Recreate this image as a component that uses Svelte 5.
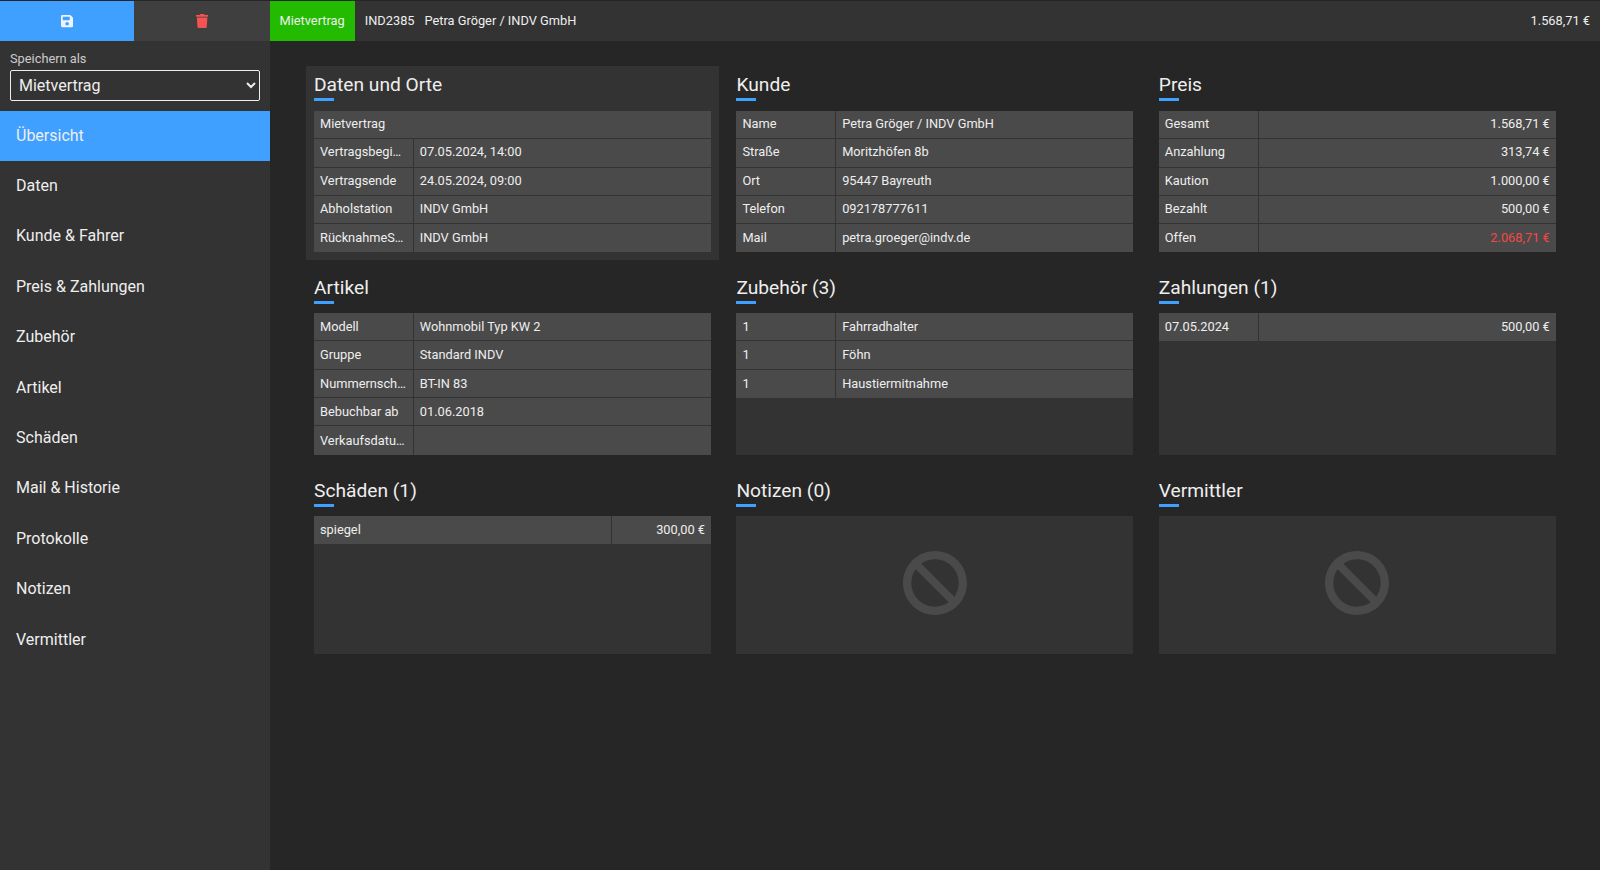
<script>
  // Contract overview: left nav plus a 3x3 grid of summary panels
  const navItems = ['Übersicht', 'Daten', 'Kunde & Fahrer', 'Preis & Zahlungen', 'Zubehör', 'Artikel', 'Schäden', 'Mail & Historie', 'Protokolle', 'Notizen', 'Vermittler'];

  const panels = [
    { title: 'Daten und Orte', active: true, rows: [
      { full: 'Mietvertrag' },
      { k: 'Vertragsbeginn', v: '07.05.2024, 14:00' },
      { k: 'Vertragsende', v: '24.05.2024, 09:00' },
      { k: 'Abholstation', v: 'INDV GmbH' },
      { k: 'RücknahmeStation', v: 'INDV GmbH' }
    ] },
    { title: 'Kunde', rows: [
      { k: 'Name', v: 'Petra Gröger / INDV GmbH' },
      { k: 'Straße', v: 'Moritzhöfen 8b' },
      { k: 'Ort', v: '95447 Bayreuth' },
      { k: 'Telefon', v: '092178777611' },
      { k: 'Mail', v: 'petra.groeger@indv.de' }
    ] },
    { title: 'Preis', right: true, rows: [
      { k: 'Gesamt', v: '1.568,71 €' },
      { k: 'Anzahlung', v: '313,74 €' },
      { k: 'Kaution', v: '1.000,00 €' },
      { k: 'Bezahlt', v: '500,00 €' },
      { k: 'Offen', v: '2.068,71 €', red: true }
    ] },
    { title: 'Artikel', rows: [
      { k: 'Modell', v: 'Wohnmobil Typ KW 2' },
      { k: 'Gruppe', v: 'Standard INDV' },
      { k: 'Nummernschild', v: 'BT-IN 83' },
      { k: 'Bebuchbar ab', v: '01.06.2018' },
      { k: 'Verkaufsdatum', v: '' }
    ] },
    { title: 'Zubehör (3)', rows: [
      { k: '1', v: 'Fahrradhalter' },
      { k: '1', v: 'Föhn' },
      { k: '1', v: 'Haustiermitnahme' }
    ] },
    { title: 'Zahlungen (1)', right: true, rows: [
      { k: '07.05.2024', v: '500,00 €' }
    ] },
    { title: 'Schäden (1)', right: true, wide: true, rows: [
      { k: 'spiegel', v: '300,00 €' }
    ] },
    { title: 'Notizen (0)', rows: [] },
    { title: 'Vermittler', rows: [] }
  ];
</script>

<div class="app">
  <header class="topbar">
    <button class="action save" aria-label="Speichern">
      <svg viewBox="0 0 448 512" width="12.25" height="14"><path fill="currentColor" d="M433.941 129.941l-83.882-83.882A48 48 0 0 0 316.118 32H48C21.49 32 0 53.49 0 80v352c0 26.51 21.49 48 48 48h352c26.51 0 48-21.49 48-48V163.882a48 48 0 0 0-14.059-33.941zM224 416c-35.346 0-64-28.654-64-64 0-35.346 28.654-64 64-64s64 28.654 64 64c0 35.346-28.654 64-64 64zm96-304.52V212c0 6.627-5.373 12-12 12H76c-6.627 0-12-5.373-12-12V108c0-6.627 5.373-12 12-12h228.52c3.183 0 6.235 1.264 8.485 3.515l3.48 3.48A11.996 11.996 0 0 1 320 111.48z"/></svg>
    </button>
    <button class="action delete" aria-label="Löschen">
      <svg viewBox="0 0 448 512" width="12.25" height="14"><path fill="currentColor" d="M432 32H312l-9.4-18.7A24 24 0 0 0 281.1 0H166.8a23.72 23.72 0 0 0-21.4 13.3L136 32H16A16 16 0 0 0 0 48v32a16 16 0 0 0 16 16h416a16 16 0 0 0 16-16V48a16 16 0 0 0-16-16zM53.2 467a48 48 0 0 0 47.9 45h245.8a48 48 0 0 0 47.9-45L416 128H32z"/></svg>
    </button>
    <span class="badge">Mietvertrag</span>
    <span class="ref">IND2385</span>
    <span class="ref">Petra Gröger / INDV GmbH</span>
    <span class="total">1.568,71 €</span>
  </header>

  <div class="body">
    <aside class="sidebar">
      <div class="save-as">
        <label for="doctype">Speichern als</label>
        <select id="doctype">
          <option>Mietvertrag</option>
          <option>Angebot</option>
          <option>Reservierung</option>
        </select>
      </div>
      <nav>
        {#each navItems as item, i}
          <div class="nav-item" class:current={i === 0}>{item}</div>
        {/each}
      </nav>
    </aside>

    <main class="grid">
      {#each panels as panel}
        <section class="panel" class:active={panel.active}>
          <h2>{panel.title}</h2>
          <div class="content" class:empty={!panel.rows.length}>
            {#each panel.rows as row}
              <div class="row" class:wide={panel.wide}>
                {#if row.full}
                  <div class="cell grow">{row.full}</div>
                {:else}
                  <div class="cell key">{row.k}</div>
                  <div class="cell grow" class:right={panel.right} class:red={row.red}>{row.v}</div>
                {/if}
              </div>
            {/each}
            {#if !panel.rows.length}
              <svg viewBox="0 0 512 512" width="66" height="66"><path fill="currentColor" d="M256 8C119.034 8 8 119.033 8 256s111.034 248 248 248 248-111.034 248-248S392.967 8 256 8zm130.108 117.892c65.448 65.448 70 165.481 19.977 235.981L150.127 105.915c70.5-50.023 170.533-45.47 235.981 19.977zM125.892 386.108c-65.448-65.448-70-165.481-19.977-235.981l255.958 255.958c-70.5 50.023-170.533 45.47-235.981-19.977z"/></svg>
            {/if}
          </div>
        </section>
      {/each}
    </main>
  </div>
</div>

<style>
  :global(body) {
    background: #262626;
    font-family: Roboto, "Liberation Sans", sans-serif;
    color: #eee;
  }

  .app {
    height: 870px;
    padding-top: 1px;
    box-sizing: border-box;
    display: flex;
    flex-direction: column;
    overflow: hidden;
  }

  .topbar {
    height: 40px;
    flex: none;
    display: flex;
    align-items: center;
    background: #333;
    font-size: 12.8px;
    line-height: 38px;
  }

  .action {
    height: 100%;
    width: 134px;
    border: 0;
    padding: 0;
    display: flex;
    align-items: center;
    justify-content: center;
  }

  .save {
    background: #3fa0ff;
    color: #eef4ff;
  }

  .delete {
    width: 136px;
    background: #3f3f3f;
    color: #f55353;
  }

  .badge {
    height: 100%;
    display: flex;
    align-items: center;
    padding: 0 10px 0 9.5px;
    box-sizing: border-box;
    background: #22bb00;
    color: #eee;
  }

  .ref {
    margin-left: 10px;
  }

  .total {
    margin-left: auto;
    padding-right: 10px;
  }

  .body {
    flex: 1;
    display: flex;
    min-height: 0;
  }

  .sidebar {
    width: 270px;
    flex: none;
    background: #333;
  }

  .save-as {
    height: 70px;
    padding: 7px 10px 0;
    box-sizing: border-box;
  }

  label {
    display: block;
    font-size: 12.8px;
    line-height: 22px;
    color: #ccc;
  }

  select {
    display: block;
    width: 250px;
    height: 31px;
    margin: 0;
    padding: 0 4px;
    background: #333;
    color: #eee;
    border: 1px solid #eee;
    border-radius: 2px;
    font: 16px Roboto, sans-serif;
  }

  .nav-item {
    height: 50.4px;
    box-sizing: border-box;
    display: flex;
    align-items: center;
    padding: 0 0 2px 16px;
    font-size: 16px;
    color: #eee;
  }

  .current {
    background: #3fa0ff;
  }

  .grid {
    flex: 1;
    display: grid;
    grid-template-columns: repeat(3, 413px);
    grid-auto-rows: min-content;
    column-gap: 9.4px;
    row-gap: 8px;
    padding: 25px 0 0 36px;
  }

  .panel {
    padding: 8px;
    display: flex;
    flex-direction: column;
  }

  .active {
    background: #333;
  }

  h2 {
    position: relative;
    height: 37px;
    margin: 0;
    font-size: 19.2px;
    font-weight: 400;
    line-height: 23px;
    color: #eee;
  }

  h2::after {
    content: '';
    position: absolute;
    left: 0;
    top: 25px;
    width: 20px;
    height: 3px;
    background: #3fa0ff;
  }

  /* first row of titles sits a pixel higher in the design */
  .panel:nth-child(-n + 3) h2 {
    line-height: 21px;
  }

  .panel:nth-child(-n + 3) h2::after {
    top: 24px;
  }

  .content {
    height: 141px;
    display: flex;
    flex-direction: column;
    background: #333;
  }

  .panel:nth-child(n + 4) .content {
    height: 142px;
  }

  .panel:nth-child(n + 7) .content {
    height: 138px;
  }

  .empty {
    align-items: center;
    justify-content: center;
    padding-bottom: 4px;
    box-sizing: border-box;
    color: #4a4a4a;
  }

  .row {
    display: flex;
    height: 28.25px;
    flex: none;
    box-sizing: border-box;
    border-bottom: 1px solid #333;
    font-size: 12.8px;
  }

  .row:last-child {
    border-bottom: 0;
  }

  .row:nth-child(5) {
    flex: 1 1 auto;
  }

  .cell {
    display: block;
    padding: 0 6px;
    line-height: 25px;
    background: #4a4a4a;
    min-width: 0;
    overflow: hidden;
    white-space: nowrap;
  }

  .row:nth-child(5) .cell {
    line-height: 27px;
  }

  .panel:nth-child(n + 4) .cell {
    line-height: 27px;
  }

  .panel:nth-child(n + 4) .row:nth-child(5) .cell {
    line-height: 29px;
  }

  .key {
    width: calc(25% + 0.5px);
    flex: none;
    box-sizing: border-box;
    padding-right: 7px;
    text-overflow: ellipsis;
    border-right: 1px solid #333;
  }

  .wide .key {
    width: 75%;
  }

  .grow {
    flex: 1;
  }

  .right {
    text-align: right;
  }

  .red {
    color: #f44848;
  }
</style>
